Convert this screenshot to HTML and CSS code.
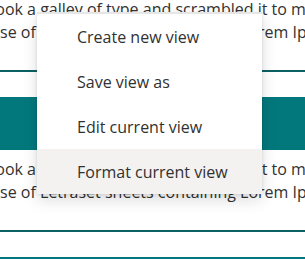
FILE: index.html
```html
<!DOCTYPE html>
<html lang="en">
<head>
  <meta charset="UTF-8">
  <title>View menu</title>
  <link rel="stylesheet" href="styles.css">
</head>
<body>

  <div class="page">
    <div class="card">
      <div class="card-head"></div>
      <div class="card-body">
        <p class="line">printer took a galley of type and scrambled it to make a type specimen book.</p>
        <p class="line">the release of Letraset sheets containing Lorem Ipsum passages</p>
      </div>
    </div>
    <div class="card">
      <div class="card-head"></div>
      <div class="card-body">
        <p class="line">printer took a galley of type and scrambled it to make a type specimen book.</p>
        <p class="line">the release of Letraset sheets containing Lorem Ipsum passages</p>
      </div>
    </div>
    <div class="card">
      <div class="card-head"></div>
    </div>
  </div>

  <ul class="menu">
    <li class="menu-item">Create new view</li>
    <li class="menu-item">Save view as</li>
    <li class="menu-item">Edit current view</li>
    <li class="menu-item hover">Format current view</li>
  </ul>

</body>
</html>
```

FILE: styles.css
```css
body {
  margin: 0;
  font-family: "Open Sans", sans-serif;
  color: #323130;
  background: #fff;
  overflow: hidden;
}
.page {
  margin-top: -63px;
  overflow: hidden;
}
.card {
  margin-bottom: 25px;
}
.card-head {
  height: 53px;
  background: #03787c;
}
.card-body {
  height: 72px;
  padding-top: 8px;
  border-bottom: 2px solid #0b6063;
}
.line {
  margin: 0 0 0 -66px;
  white-space: nowrap;
  font-size: 16px;
  line-height: 23px;
}
.menu {
  position: absolute;
  left: 37px;
  top: 12px;
  width: 225px;
  margin: 0;
  padding: 0;
  list-style: none;
  background: #fff;
  border-top: 2px solid #e6e6e6;
  box-shadow: 0 6.4px 14.4px rgba(0, 0, 0, 0.132), 0 1.2px 3.6px rgba(0, 0, 0, 0.108);
}
.menu-item {
  height: 45px;
  line-height: 46px;
  padding-left: 40px;
  font-size: 16px;
  color: #323130;
}
.menu-item.hover {
  background: #f3f2f1;
}
```
